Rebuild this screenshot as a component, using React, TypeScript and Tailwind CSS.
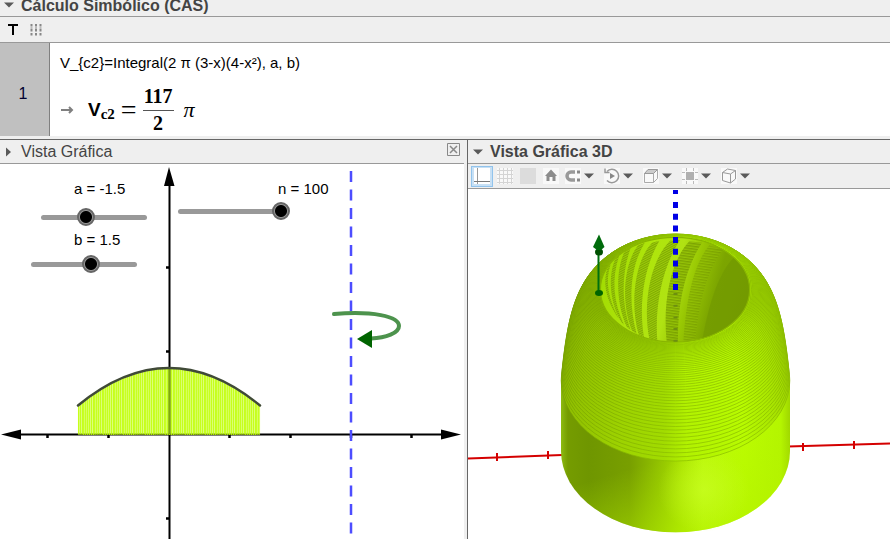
import { useState } from "react";
import type { ReactNode } from "react";

const SCALE_R = 25.4;
const SCALE_Z = 40.3;
const CENTER_X = 675.5;
const BASE_Y = 451;
const FLATTEN = 0.705;

const rings = Array.from({ length: 51 }, (_, i) => {
  const x = -1.5 + i * 0.03;
  const r = SCALE_R * (3 - x);
  const bulge = 6 * Math.sin((Math.PI * i) / 50);
  return { cy: BASE_Y - SCALE_Z * (4 - x * x), rx: r + bulge, ry: r * FLATTEN };
});

const bars = Array.from({ length: 100 }, (_, i) => {
  const x = -1.5 + i * 0.03;
  const height = 16.75 * (4 - x * x);
  return { x: 169 + x * 60.7, height };
});

const bands = [
  { d: "M36 104 C18 150 30 200 62 252 L68 260 C38 200 26 150 44 96Z", hatch: "url(#hatch-left)" },
  { d: "M58 80 C36 130 40 210 76 270 L84 278 C52 210 46 140 70 70Z", hatch: "url(#hatch-left)" },
  { d: "M86 58 C60 110 58 210 92 284 L104 294 C78 220 74 130 104 48Z", hatch: "url(#hatch-left)" },
  { d: "M126 40 C80 100 76 220 108 296 L122 305 C98 220 98 110 146 33Z", hatch: "url(#hatch-left)" },
  { d: "M168 32 C114 90 102 220 128 308 L144 316 C128 220 142 110 190 26Z", hatch: "url(#hatch-left)" },
  { d: "M222 26 C160 90 140 220 160 320 L184 326 C176 230 196 110 252 24Z", hatch: "url(#hatch-left)" },
  { d: "M280 28 C222 90 200 210 212 330 L246 332 C244 220 266 110 318 32Z", hatch: "url(#hatch-mid)" },
  { d: "M340 40 C290 100 270 210 262 332 L298 328 C308 220 330 120 380 54Z", hatch: "url(#hatch-mid)" },
];

function Triangle({ side = false }: { side?: boolean }) {
  return (
    <svg width="10" height="10" viewBox="0 0 10 10" aria-hidden="true" className="shrink-0">
      <path d={side ? "M2 0.5 L7 5 L2 9.5Z" : "M0 2.5 H10 L5 7.5Z"} fill="#5a5a5a" />
    </svg>
  );
}

function Slider(props: { id: string; label: string; min: number; max: number; start: number; place: string; labelPlace: string }) {
  const [value, setValue] = useState(props.start);
  return (
    <>
      <label htmlFor={props.id} className={`absolute text-[15px] leading-5 text-black ${props.labelPlace}`}>
        {props.label} = {value}
      </label>
      <div className={`absolute flex h-[18px] w-[118px] items-center ${props.place}`}>
        <span className="absolute inset-x-[6px] h-[5px] rounded-full bg-[#999]" />
        <input
          id={props.id}
          type="range"
          min={props.min}
          max={props.max}
          step="0.1"
          value={value}
          onChange={(e) => setValue(Number(e.target.value))}
          className="relative m-0 h-[18px] w-full appearance-none bg-transparent [&::-webkit-slider-thumb]:size-[18px] [&::-webkit-slider-thumb]:appearance-none [&::-webkit-slider-thumb]:rounded-full [&::-webkit-slider-thumb]:border-2 [&::-webkit-slider-thumb]:border-[#666] [&::-webkit-slider-thumb]:bg-[radial-gradient(circle,#000_0_5.5px,#999_6.5px)]"
        />
      </div>
    </>
  );
}

function Graph2D() {
  return (
    <svg className="absolute inset-0 h-full w-full" aria-label="Vista Gráfica">
      <g transform="translate(0 -164)">
        <g stroke="#000" strokeWidth="2">
          <path d="M169.5 180 V700" />
          <path d="M10 434.5 H450" />
          <path d="M47.5 435 v3 M108.5 435 v3 M229.5 435 v3 M290.5 435 v3 M351 435 v3 M411.5 435 v3" strokeWidth="2.5" />
          <path d="M166 267.5 h3 M166 351.5 h3 M166 518.5 h3" strokeWidth="2.5" />
        </g>
        <path d="M169 167 L174.5 186 H164Z M1 434.5 L21 429.5 V439.5Z M461 434.5 L441 429.5 V439.5Z" />
        {bars.map((b, i) => (
          <g key={i}>
            <rect x={b.x} y={435 - b.height} width="1.82" height={b.height} fill="#c4ff1a" fillOpacity="0.7" />
            <path d={`M${Math.round(b.x) + 0.5} 435 V${435 - b.height}`} stroke="#bfff00" strokeOpacity="0.7" />
          </g>
        ))}
        <path d="M169.5 368 V434" stroke="#7fa90a" strokeWidth="2" />
        <path d="M78 434.5 H260" stroke="#708f10" strokeDasharray="1 1" />
        <path d="M78 405.5 Q169 330.5 260 405.5" fill="none" stroke="#404a38" strokeWidth="2.5" strokeLinecap="round" />
        <path d="M351 171 V535" stroke="#4d4dff" strokeWidth="2.5" strokeDasharray="11 7.5" />
        <path d="M334 314 C372 311 399 316 399 326 C399 333 386 338 371 338.5" fill="none" stroke="#4d934d" strokeWidth="4" strokeLinecap="round" />
        <path d="M357 339 L372 330 V348Z" fill="#006400" />
      </g>
    </svg>
  );
}

function Graph3D() {
  return (
    <svg className="absolute inset-0 h-full w-full" aria-label="Vista Gráfica 3D">
      <defs>
        <linearGradient id="wall">
          <stop offset="0" stopColor="#8dbb10" />
          <stop offset="0.03" stopColor="#759c00" />
          <stop offset="0.12" stopColor="#6f9600" />
          <stop offset="0.3" stopColor="#789f00" />
          <stop offset="0.45" stopColor="#96c800" />
          <stop offset="0.53" stopColor="#aae200" />
          <stop offset="0.62" stopColor="#bcf90a" />
          <stop offset="0.8" stopColor="#bbfc00" />
          <stop offset="0.96" stopColor="#b4f500" />
          <stop offset="1" stopColor="#9fd600" />
        </linearGradient>
        <linearGradient id="lift" x1="0.3" y1="0.1" x2="0.7" y2="1">
          <stop offset="0.45" stopColor="#b4f000" stopOpacity="0" />
          <stop offset="1" stopColor="#b4f000" stopOpacity="0.6" />
        </linearGradient>
        <linearGradient id="dome">
          <stop offset="0" stopColor="#8fbd00" />
          <stop offset="0.25" stopColor="#9dd200" />
          <stop offset="0.45" stopColor="#a2dc00" />
          <stop offset="0.55" stopColor="#b2f200" />
          <stop offset="0.8" stopColor="#b8fb00" />
          <stop offset="1" stopColor="#a1d900" />
        </linearGradient>
        <linearGradient id="ringline">
          <stop offset="0" stopColor="#759f00" />
          <stop offset="0.5" stopColor="#8cbe00" />
          <stop offset="1" stopColor="#87b700" />
        </linearGradient>
        <linearGradient id="inside" x1="0" y1="0.35" x2="1" y2="0.55">
          <stop offset="0" stopColor="#a0da00" />
          <stop offset="0.3" stopColor="#afe50c" />
          <stop offset="0.48" stopColor="#b0e213" />
          <stop offset="0.6" stopColor="#98c703" />
          <stop offset="0.75" stopColor="#7ca500" />
          <stop offset="1" stopColor="#78a000" />
        </linearGradient>
        <radialGradient id="glow">
          <stop offset="0" stopColor="#ccff28" stopOpacity="0.6" />
          <stop offset="1" stopColor="#ccff28" stopOpacity="0" />
        </radialGradient>
        <pattern id="hatch-left" width="12" height="6" patternUnits="userSpaceOnUse" patternTransform="rotate(-28)">
          <rect width="12" height="6" fill="#98c80a" />
          <rect width="12" height="3" fill="#789e00" />
        </pattern>
        <pattern id="hatch-mid" width="12" height="8" patternUnits="userSpaceOnUse" patternTransform="rotate(8)">
          <rect width="12" height="8" fill="#92bf06" />
          <rect width="12" height="4" fill="#759a00" />
        </pattern>
        <clipPath id="mouth">
          <ellipse cx="237" cy="173" rx="224" ry="157" />
        </clipPath>
      </defs>
      <g transform="translate(-468 -189)">
        <path d="M468 458.5 L562 455 M788 446.5 L890 443.5" stroke="#d40000" strokeWidth="2" />
        <path d="M497 453 v8 M548 451 v8 M803 443 v8 M854 441 v8" stroke="#d40000" strokeWidth="2" />
        <path d="M561 380 V451 A114 81 0 0 0 790 451 V380Z" fill="url(#wall)" />
        <path d="M561 380 V451 A114 81 0 0 0 790 451 V380Z" fill="url(#lift)" />
        <ellipse cx="704" cy="490" rx="46" ry="42" fill="url(#glow)" />
        {rings.map((r, i) => (
          <ellipse key={i} cx={CENTER_X} cy={r.cy} rx={r.rx} ry={r.ry} fill="url(#dome)" stroke="url(#ringline)" strokeWidth="0.7" />
        ))}
        <g transform="translate(596 232) scale(0.33333)">
          <g clipPath="url(#mouth)">
            <rect x="0" y="0" width="480" height="345" fill="url(#inside)" />
            {bands.map((b, i) => (
              <path key={i} d={b.d} fill={b.hatch} fillOpacity={i > 6 ? 0.6 : 0.85} />
            ))}
            <path d="M480 60 C420 30 350 130 318 332 L480 340Z" fill="#6c9000" fillOpacity="0.4" />
          </g>
          <ellipse cx="237" cy="173" rx="224" ry="157" fill="none" stroke="#88b500" strokeWidth="4" />
        </g>
        <path d="M675.5 190 V290" stroke="#0000e6" strokeWidth="5" strokeDasharray="4 8 6 5.7 6 5.7 6 5.7 6 5.7 6 5.7 6 5.7 6 5.7 6 40" />
        <path d="M675.5 293 V342" stroke="#6d8f10" strokeWidth="4" strokeDasharray="2 9.7" />
        <path d="M598.5 251 V292" stroke="#00700f" strokeWidth="2" />
        <ellipse cx="599" cy="293" rx="4" ry="3" fill="#006400" />
        <ellipse cx="599" cy="252" rx="4" ry="3.5" fill="#005000" />
        <path d="M599 234.5 L604.5 247 L601 250 H597 L593 247Z" fill="#006b0c" />
      </g>
    </svg>
  );
}

function Tool({ label, menu = false, children }: { label: string; menu?: boolean; children: ReactNode }) {
  return (
    <button type="button" aria-label={label} className="flex shrink-0 items-center gap-[3px]">
      <svg width="16" height="16" viewBox="0 0 16 16" fill="none" stroke="#999">
        <rect width="16" height="16" fill="#f9f9f9" stroke="none" />
        {children}
      </svg>
      {menu && <Triangle />}
    </button>
  );
}

function Toolbar3D() {
  return (
    <div className="flex h-[25px] items-center border-b border-[#999] bg-[#efefef] pl-[3px]">
      <button type="button" aria-label="Ejes" aria-pressed="true" className="mr-[4px] flex h-[21px] w-[22px] items-center justify-center border border-[#91c3ec] bg-[#c8e0f4]">
        <svg width="16" height="16" fill="none" stroke="#777">
          <rect width="16" height="16" fill="#fff" stroke="none" />
          <path d="M3.5 0 V16" stroke="#999" />
          <path d="M0 13.5 H16" />
        </svg>
      </button>
      <div className="flex items-center gap-[7px]">
        <Tool label="Cuadrícula"><path d="M2.5 0V16M6.5 0V16M10.5 0V16M14.5 0V16M0 2.5H16M0 6.5H16M0 10.5H16M0 14.5H16" stroke="#d4d4d4" /></Tool>
        <Tool label="Plano"><rect width="16" height="16" fill="#dcdcdc" stroke="none" /></Tool>
        <Tool label="Vista inicial"><path d="M8 1.5 L14 8 H12.5 V13 H9.5 V9 H6.5 V13 H3.5 V8 H2Z" fill="#8c8c8c" stroke="none" /></Tool>
      </div>
      <div className="ml-[6px] flex items-center gap-[10px]">
        <Tool label="Atracción a la cuadrícula" menu>
          <path d="M10 4 H6 A4 4 0 0 0 6 12 H10" stroke="#999" strokeWidth="3.5" />
          <path d="M12 4 H15 M12 12 H15" stroke="#888" strokeWidth="3" />
        </Tool>
        <Tool label="Rotar la vista" menu>
          <path d="M3 3.5 A6.7 6.7 0 1 1 3 12.5" strokeWidth="1.5" />
          <path d="M1 0.5 V4.5 H5.5" strokeWidth="1.5" />
          <path d="M6 5 L11 8 L6 11Z" fill="#888" stroke="none" />
        </Tool>
        <Tool label="Orientación de la vista" menu>
          <path d="M1.5 5.5 H10.5 V14.5 H1.5Z M10.5 14.5 L14.5 10.5 V1.5" stroke="#aaa" />
          <path d="M1.5 5.5 L5 1.5 H14.5 L10.5 5.5Z" fill="#ccc" />
        </Tool>
        <Tool label="Recorte" menu>
          <rect x="4" y="4" width="8" height="8" fill="#b0b0b0" stroke="none" />
          <path d="M4.5 0V3 M11.5 0V3 M4.5 13V16 M11.5 13V16 M0 4.5H3 M0 11.5H3 M13 4.5H16 M13 11.5H16" stroke="#bbb" />
        </Tool>
        <Tool label="Proyección" menu>
          <path d="M1.5 4.5 L9.5 6 V15 L1.5 12.5Z M9.5 15 L14.5 11 V2.5 L9.5 6 M1.5 4.5 L6.5 1 L14.5 2.5" />
        </Tool>
      </div>
    </div>
  );
}

export default function App() {
  return (
    <main className="flex min-h-screen flex-col overflow-hidden bg-[#efefef] text-[16px] text-black [font-family:'Liberation_Sans',Arial,sans-serif]">
      <section>
        <header className="flex h-[17px] items-end gap-[7px] overflow-hidden border-b border-[#999] pl-[4px] font-bold text-[#444]">
          <span className="flex h-[16px] items-start"><Triangle /></span>
          <h1 className="h-[20px] leading-5">Cálculo Simbólico (CAS)</h1>
        </header>
        <div className="flex h-[26px] items-center gap-[9px] border-b border-[#999] pl-[7px]">
          <button type="button" aria-label="Texto">
            <svg width="12" height="14" aria-hidden="true"><path d="M1 2 H11 M6 1 V12" stroke="#000" strokeWidth="2" /></svg>
          </button>
          <button type="button" aria-label="Teclado">
            <svg width="16" height="14" fill="none" stroke="#888" aria-hidden="true">
              <path d="M3.5 1V13 M8 1V13 M12.5 1V13" strokeWidth="2" strokeDasharray="2.5 0.5 0.5 1" />
            </svg>
          </button>
        </div>
        <div className="flex h-[93px] bg-white">
          <div className="flex w-[50px] shrink-0 items-center justify-center border-r border-[#808080] bg-[#c0c0c0] pt-[8px] text-[#000030]">
            <span className="pr-[3px]">1</span>
          </div>
          <div className="pt-[10px] pl-[10px]">
            <p className="text-[15px] leading-5">V_&#123;c2&#125;=Integral(2 π (3-x)(4-x²), a, b)</p>
            <div className="mt-[13px] flex items-center font-bold [font-family:'Liberation_Serif',serif]">
              <svg width="14" height="10" className="mr-[14px]" aria-hidden="true">
                <path d="M1 5 H12 M9 2 L12 5 L9 8" fill="none" stroke="#808080" strokeWidth="2" />
              </svg>
              <span className="text-[19px] leading-5 [font-family:'Liberation_Sans',Arial,sans-serif]">V</span>
              <span className="pt-[8px] text-[15px] leading-4">c2</span>
              <span className="mx-[6px] text-[28px] leading-6 font-normal">=</span>
              <span className="flex flex-col items-center text-[20px]">
                <span className="border-b border-[#555] px-px pb-[4px] leading-5">117</span>
                <span className="pt-[2px] leading-5">2</span>
              </span>
              <span className="ml-[10px] text-[22px] leading-5 font-normal italic">π</span>
            </div>
          </div>
        </div>
      </section>

      <div className="mt-[3px] grid flex-1 grid-cols-[minmax(0,467fr)_minmax(0,423fr)] border-t border-[#666]">
        <section className="flex flex-col pr-[3px]">
          <header className="flex h-[24px] items-center gap-[7px] border-b border-[#999] pt-px pr-[3px] pl-[4px] text-[#444]">
            <Triangle side />
            <h2 className="flex-1 leading-5">Vista Gráfica</h2>
            <button type="button" aria-label="Cerrar" className="mb-[6px] flex">
              <svg width="15" height="15" fill="none" stroke="#888" aria-hidden="true">
                <path d="M1.5 1.5 H13.5 V13.5 H1.5Z" />
                <path d="M4 4 L11 11 M11 4 L4 11" strokeWidth="1.5" />
              </svg>
            </button>
          </header>
          <div className="relative flex-1 overflow-hidden bg-white">
            <Graph2D />
            <Slider id="a" label="a" min={-5.7} max={4.3} start={-1.5} labelPlace="left-[74px] top-[15px]" place="left-[35px] top-[44px]" />
            <Slider id="b" label="b" min={-4.2} max={5.8} start={1.5} labelPlace="left-[74px] top-[66px]" place="left-[25px] top-[91px]" />
            <Slider id="n" label="n" min={0} max={100} start={100} labelPlace="left-[278px] top-[15px]" place="left-[172px] top-[38px]" />
          </div>
        </section>
        <section className="flex flex-col border-l border-[#666]">
          <header className="flex h-[24px] items-center gap-[7px] border-b border-[#999] pt-px pl-[5px] font-bold text-[#444]">
            <Triangle />
            <h2 className="leading-5">Vista Gráfica 3D</h2>
          </header>
          <Toolbar3D />
          <div className="relative flex-1 overflow-hidden bg-white">
            <Graph3D />
          </div>
        </section>
      </div>
    </main>
  );
}
